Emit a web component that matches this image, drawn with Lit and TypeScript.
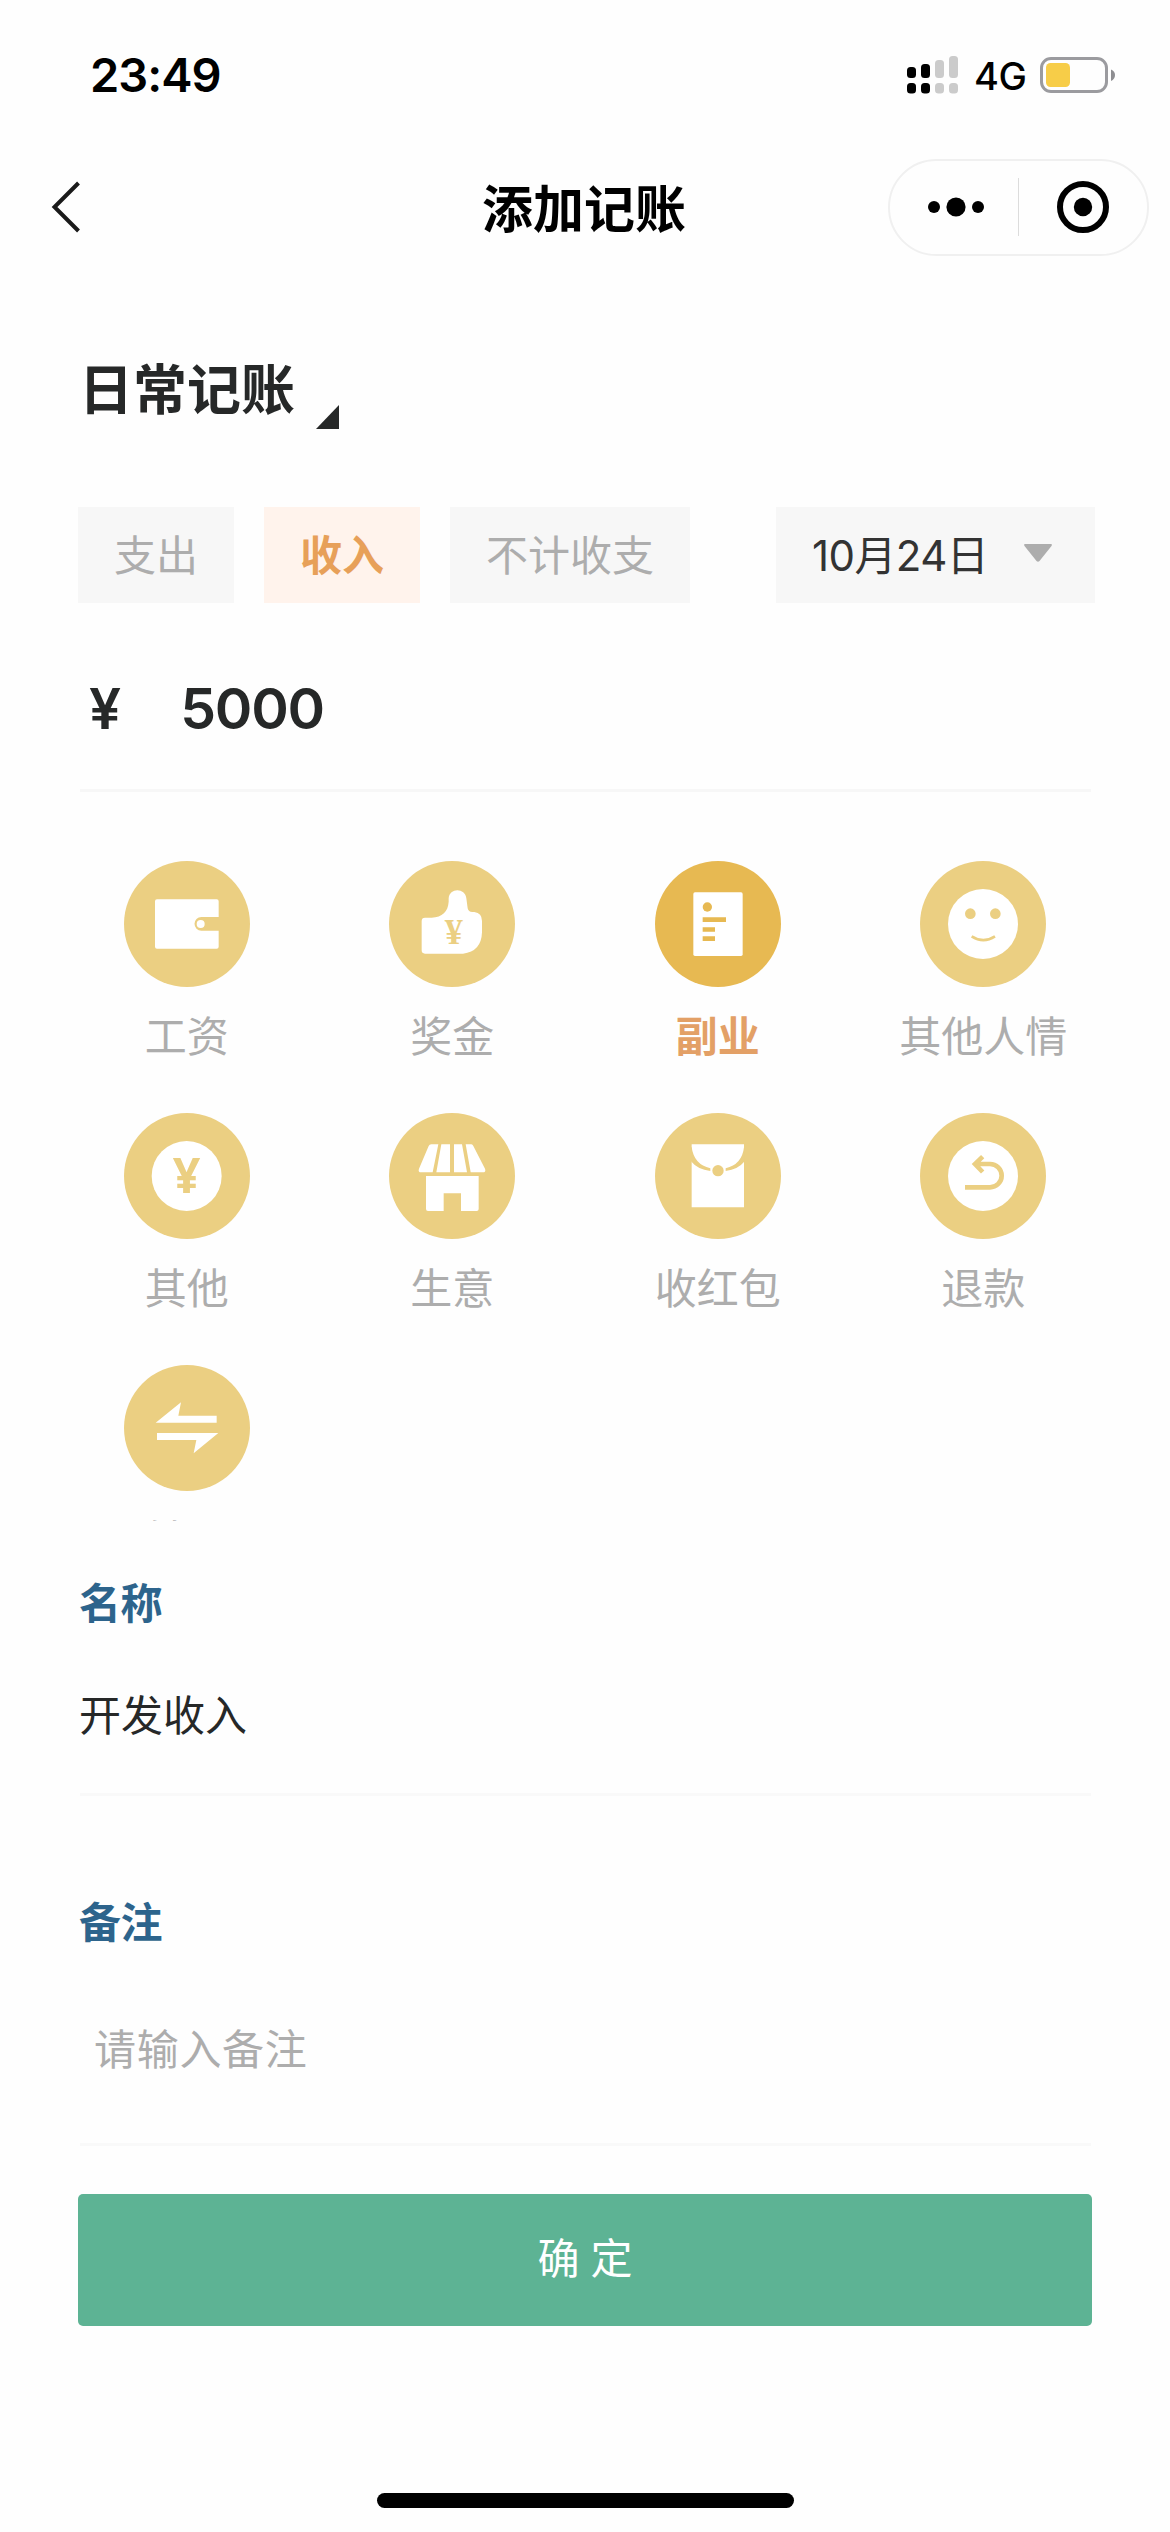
import { LitElement, html, css, svg, type SVGTemplateResult } from "lit";
import { customElement, property, state } from "lit/decorators.js";
import { classMap } from "lit/directives/class-map.js";

interface Category {
  name: string;
  icon: string;
}

// All glyphs share a 378-unit square whose inscribed circle is the badge.
const GLYPHS: Record<string, SVGTemplateResult> = {
  wallet: svg`
    <path class="w" d="M99 115H278Q284 115 284 121V168H232A20.500 20.500 0 0 0 232 209H284V257Q284 263 278 263H99Q93 263 93 257V121Q93 115 99 115Z"/>
    <circle class="w" cx="230" cy="189" r="12"/>`,
  bonus: svg`
    <path class="w" d="M108 170H128C160 168 177 152 179 122V112C181 80 229 80 232 112L236 142Q238 153 250 153H256Q279 156 279 180V214Q277 272 222 278H108Q98 278 98 268V180Q98 170 108 170Z"/>
    <text class="g serif" x="194" y="250" font-size="108">¥</text>`,
  note: svg`
    <rect class="w" x="115" y="94" width="148" height="191" rx="5"/>
    <circle class="g" cx="157" cy="138" r="14"/>
    <path class="g" d="M143 169h70v14h-70zM143 199h37v13h-37zM143 226h37v14h-37z"/>`,
  smile: svg`
    <circle class="w" cx="189" cy="189" r="105"/>
    <circle class="g" cx="151" cy="158" r="16"/>
    <circle class="g" cx="226" cy="158" r="16"/>
    <path class="l" stroke-width="8" d="M155 226Q190 249 225 226"/>`,
  yuan: svg`
    <circle class="w" cx="188" cy="189" r="105"/>
    <text class="g sans" x="188" y="241" font-size="145">¥</text>`,
  shop: svg`
    <path class="w" d="M127 94H148L131 178H97Q86 178 90 167L119 99Q121 94 127 94ZM157 94H183V178H142ZM195 94H219L234 178H195ZM230 94H247Q251 94 253 99L288 167Q292 178 281 178H245Z"/>
    <path class="w" d="M111 189H269V288Q269 294 263 294H216V241H164V294H117Q111 294 111 288Z"/>`,
  packet: svg`
    <path class="w" d="M110 94H267V283H110Z"/>
    <path class="g" d="M108 103H110Q117 155 166 166V174Q128 170 108 145ZM269 103H267Q261 155 212 166V174Q249 170 269 145Z"/>
    <circle class="g" cx="189" cy="173" r="17"/>`,
  refund: svg`
    <circle class="w" cx="189" cy="189" r="105"/>
    <path class="l" stroke-width="14" d="M135 223H210A35 35 0 0 0 210 153H168M188 131L165 153L188 177"/>`,
  transfer: svg`
    <path class="w" d="M95 173L171 112L163 152H278V173ZM99 204H283L209 265L217 225H99Z"/>`,
};

@customElement("category-icon")
class CategoryIcon extends LitElement {
  @property() name = "";
  @property({ type: Boolean, reflect: true }) active = false;

  static styles = css`
    :host { display: block; width: 126px; height: 126px; --gold: #ebcf82; }
    :host([active]) { --gold: #e7b952; }
    svg { display: block; width: 126px; height: 126px; }
    .g { fill: var(--gold); }
    .w { fill: #fff; }
    .l { fill: none; stroke: var(--gold); }
    text { text-anchor: middle; font-weight: 700; }
    .serif { font-family: "Liberation Serif", serif; }
    .sans { font-family: "Noto Sans", sans-serif; }
  `;

  render() {
    return html`<svg viewBox="0 0 378 378">
      <circle class="g" cx="189" cy="189" r="189"></circle>${GLYPHS[this.name]}
    </svg>`;
  }
}

@customElement("status-bar")
class StatusBar extends LitElement {
  static styles = css`
    :host {
      display: flex; align-items: center; justify-content: space-between;
      height: 150px; box-sizing: border-box; padding: 0 55px 0 90px;
      font-family: Inter, sans-serif; color: #000;
    }
    .time { font-size: 47px; font-weight: 600; line-height: 56px; letter-spacing: -1px; }
    .right { display: flex; align-items: center; }
    .signal { width: 51px; height: 38px; margin-right: 16px; }
    .net { font-size: 38px; font-weight: 500; line-height: 46px; width: 66px; margin-top: 1px; letter-spacing: -0.5px; }
    .battery { width: 75px; height: 36px; }
    svg { display: block; }
  `;

  render() {
    return html`
      <div class="time">23:49</div>
      <div class="right">
        <svg class="signal" viewBox="0 0 51 38">
          <g fill="#000">
            <rect x="0" y="11" width="9" height="11" rx="3.500"/><rect x="0" y="27" width="9" height="10.500" rx="3.500"/>
            <rect x="14" y="8" width="9" height="14" rx="3.500"/><rect x="14" y="27" width="9" height="10.500" rx="3.500"/>
          </g>
          <g fill="#cbcbcb">
            <rect x="28" y="4" width="9" height="18" rx="3.500"/><rect x="28" y="27" width="9" height="10.500" rx="3.500"/>
            <rect x="42" y="0" width="9" height="22" rx="3.500"/><rect x="42" y="27" width="9" height="10.500" rx="3.500"/>
          </g>
        </svg>
        <div class="net">4G</div>
        <svg class="battery" viewBox="0 0 75 36">
          <rect x="1.500" y="1.500" width="65" height="33" rx="9.500" fill="none" stroke="#9b9b9f" stroke-width="3"/>
          <rect x="6" y="6" width="24" height="24" rx="4.500" fill="#f7cd48"/>
          <path d="M71 12.500Q75 14 75 18Q75 22 71 24Z" fill="#8e8e92"/>
        </svg>
      </div>`;
  }
}

@customElement("nav-bar")
class NavBar extends LitElement {
  @property() heading = "";

  static styles = css`
    :host {
      display: grid; grid-template-columns: 1fr auto 1fr; align-items: center;
      height: 114px; padding: 0 21px 0 51px; box-sizing: border-box;
      color: #000; font-family: Inter, "Noto Sans CJK SC", sans-serif;
    }
    .back { width: 30px; height: 54px; }
    .title { font-size: 51px; font-weight: 700; line-height: 62px; padding: 5px 32px 0 0; }
    .capsule {
      display: flex; align-items: center; justify-self: end; box-sizing: border-box;
      width: 261px; height: 97px; border: 2px solid #f0f0f0; border-radius: 49px;
    }
    .half { flex: 1; display: flex; justify-content: center; align-items: center; }
    .rule { width: 1px; height: 58px; background: #dcdcdc; }
    svg { display: block; }
  `;

  render() {
    return html`
      <svg class="back" viewBox="0 0 30 54">
        <path d="M27.500 3L3.500 27L27.500 51" fill="none" stroke="#1a1a1a" stroke-width="4"/>
      </svg>
      <div class="title">${this.heading}</div>
      <div class="capsule">
        <div class="half">
          <svg width="60" height="24" viewBox="0 0 60 24">
            <circle cx="10" cy="12" r="6"/><circle cx="32" cy="12" r="9.600"/><circle cx="54" cy="12" r="6"/>
          </svg>
        </div>
        <div class="rule"></div>
        <div class="half">
          <svg width="54" height="54" viewBox="0 0 54 54">
            <circle cx="27" cy="27" r="23" fill="none" stroke="#000" stroke-width="6"/><circle cx="27" cy="27" r="9.200"/>
          </svg>
        </div>
      </div>`;
  }
}

@customElement("app-root")
class AppRoot extends LitElement {
  @state() private kind = "收入";
  @state() private selected = "副业";

  private kinds = ["支出", "收入", "不计收支"];
  private categories: Category[] = [
    { name: "工资", icon: "wallet" },
    { name: "奖金", icon: "bonus" },
    { name: "副业", icon: "note" },
    { name: "其他人情", icon: "smile" },
    { name: "其他", icon: "yuan" },
    { name: "生意", icon: "shop" },
    { name: "收红包", icon: "packet" },
    { name: "退款", icon: "refund" },
    { name: "转账", icon: "transfer" },
  ];

  static styles = css`
    :host {
      display: flex; flex-direction: column; width: 1170px; height: 2532px;
      background: #fefefe; color: #262828; overflow: hidden;
      font-family: Inter, "Noto Sans CJK SC", sans-serif; font-size: 42px; line-height: 60px;
    }
    svg { display: block; }
    .main { padding: 93px 78px 0; }
    .book { display: flex; align-items: flex-end; height: 72px; }
    .book-name { font-size: 54px; font-weight: 700; line-height: 62px; align-self: flex-start; margin: 3px 0 0 1px; }
    .corner { width: 23px; height: 24px; margin-left: 21px; }
    .filters { display: flex; gap: 30px; margin: 78px -3px 0 0; }
    .chip {
      display: flex; align-items: center; justify-content: center; height: 96px; box-sizing: border-box;
      padding: 2px 36px 0; background: #f7f7f7; color: #adadad; white-space: nowrap;
    }
    .chip.on { background: #fff3ec; color: #e7a059; font-weight: 700; }
    .date { margin-left: auto; width: 319px; justify-content: space-between; padding-right: 43px; color: #333; }
    .date span { letter-spacing: -0.6px; }
    .date svg { margin-top: -4px; }
    .amount {
      display: flex; align-items: center; gap: 59px; height: 189px; box-sizing: border-box;
      margin: 0 1px 0 2px; padding: 25px 0 0 9px; border-bottom: 3px solid #f7f7f7;
      font-size: 57px; font-weight: 600;
    }
    .digits { letter-spacing: -1.2px; }
    .grid {
      display: grid; grid-template-columns: repeat(4, 265.5px); grid-auto-rows: 252px;
      height: 729px; margin: 0 -24px; padding-top: 69px; box-sizing: border-box; overflow: hidden;
    }
    .cat { display: flex; flex-direction: column; align-items: center; gap: 20px; color: #adadad; }
    .cat.on { color: #e3a066; font-weight: 700; }
    .field { margin: 0 1px 0 2px; border-bottom: 3px solid #f9f9f9; }
    .caption { color: #2d648c; font-weight: 700; margin-left: -1px; letter-spacing: -0.5px; }
    .name { margin-top: 53px; padding-bottom: 47px; }
    .name .value { margin: 52px 0 0 -1px; }
    .memo { margin-top: 97px; padding-bottom: 63px; }
    .memo .value { margin: 67px 0 0 14px; color: #adadad; letter-spacing: 0.7px; }
    .submit {
      display: block; width: 1014px; height: 132px; margin: 48px 0 0; padding: 0 0 3px; border: 0; border-radius: 5px;
      background: #5db394; color: #fff; font: inherit; word-spacing: -1px;
    }
    .home { width: 417px; height: 15px; border-radius: 8px; background: #000; margin: 167px auto 0; }
  `;

  render() {
    return html`
      <status-bar></status-bar>
      <nav-bar heading="添加记账"></nav-bar>
      <div class="main">
        <div class="book">
          <div class="book-name">日常记账</div>
          <svg class="corner" viewBox="0 0 23 24"><path d="M23 0V24H0Z" fill="#262828"/></svg>
        </div>
        <div class="filters">
          ${this.kinds.map((k) => html`
            <div class=${classMap({ chip: true, on: k === this.kind })} @click=${() => (this.kind = k)}>${k}</div>`)}
          <div class="chip date">
            <span>10月24日</span>
            <svg width="28" height="28" viewBox="0 0 28 28"><path d="M1 4H27Q28.500 4 27.500 6L15.500 21Q14 22.500 12.500 21L0.500 6Q-0.500 4 1 4Z" fill="#adadad"/></svg>
          </div>
        </div>
        <div class="amount"><span>¥</span><span class="digits">5000</span></div>
        <div class="grid">
          ${this.categories.map((c) => html`
            <div class=${classMap({ cat: true, on: c.name === this.selected })} @click=${() => (this.selected = c.name)}>
              <category-icon .name=${c.icon} ?active=${c.name === this.selected}></category-icon>
              <span>${c.name}</span>
            </div>`)}
        </div>
        <div class="field name">
          <div class="caption">名称</div>
          <div class="value">开发收入</div>
        </div>
        <div class="field memo">
          <div class="caption">备注</div>
          <div class="value">请输入备注</div>
        </div>
        <button class="submit">确 定</button>
      </div>
      <div class="home"></div>`;
  }
}
